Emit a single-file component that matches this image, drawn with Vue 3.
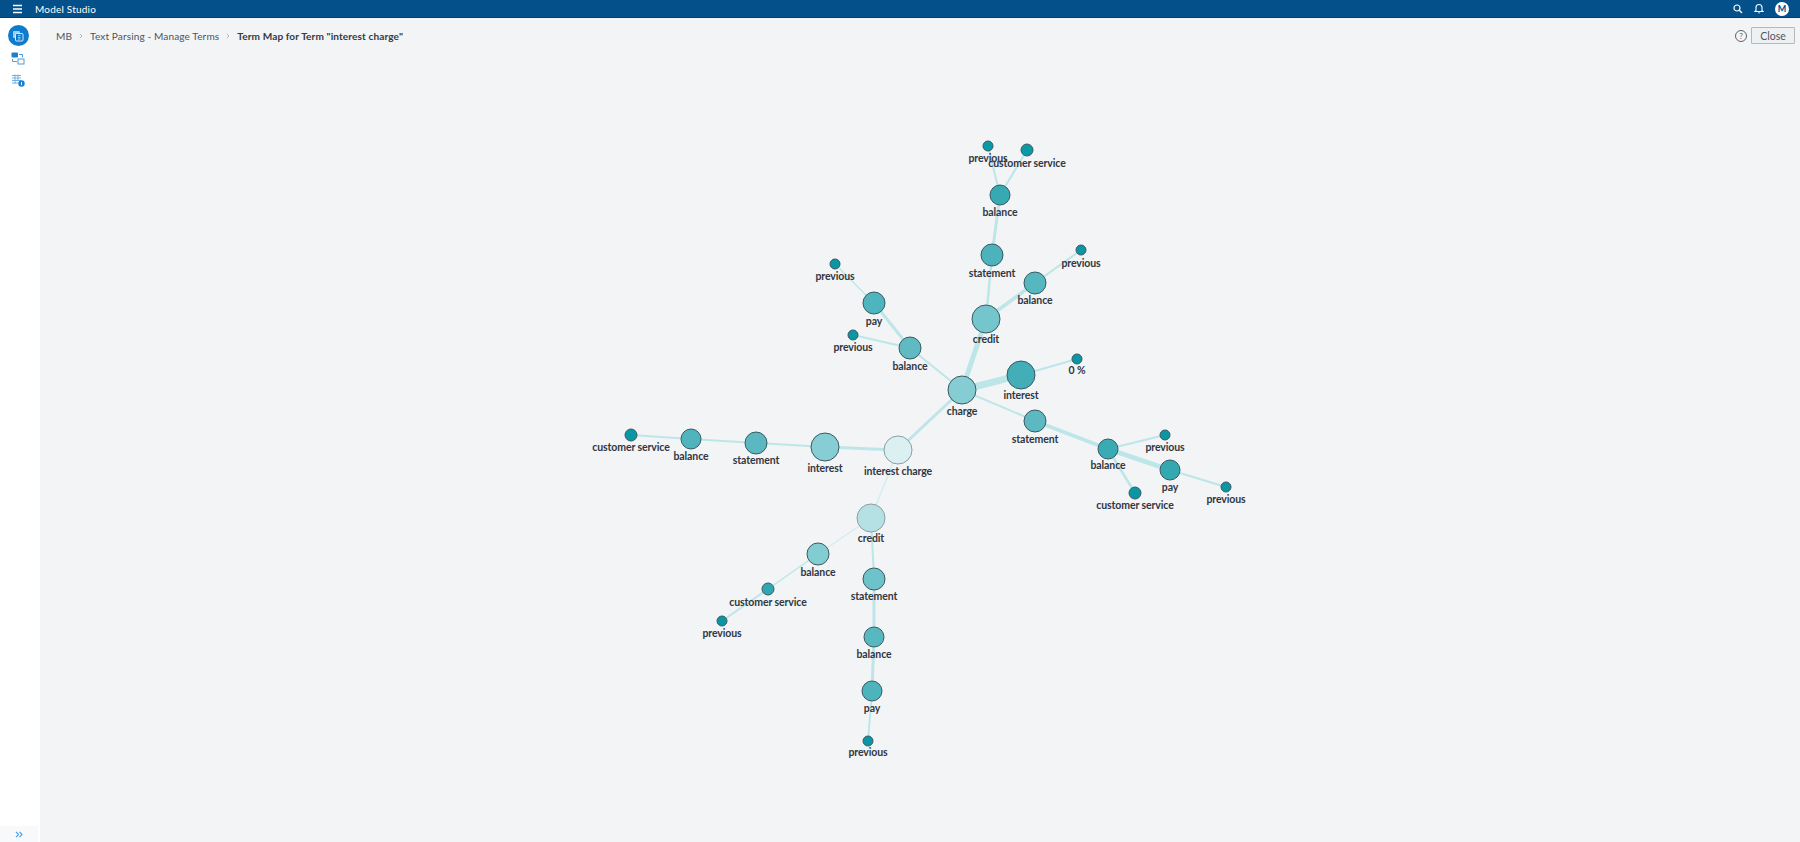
<script setup>
const nodes = {
  a1: { x: 988, y: 146, r: 5, f: '#0a99a6', t: 'previous', ly: 159 },
  a2: { x: 1027, y: 150, r: 6, f: '#0a9aa7', t: 'customer service', ly: 164 },
  a3: { x: 1000, y: 195, r: 10, f: '#36a9b3', t: 'balance', ly: 213 },
  a4: { x: 992, y: 255, r: 11, f: '#4cb2bb', t: 'statement', ly: 274 },
  a5: { x: 1035, y: 283, r: 11, f: '#56b7bf', t: 'balance', ly: 301 },
  a6: { x: 1081, y: 250, r: 5, f: '#0a97a3', t: 'previous', ly: 264 },
  a7: { x: 986, y: 319, r: 14, f: '#74c5cc', t: 'credit', ly: 340 },
  b1: { x: 835, y: 264, r: 5, f: '#0a97a3', t: 'previous', ly: 277 },
  b2: { x: 874, y: 303, r: 11, f: '#4eb4bd', t: 'pay', ly: 322 },
  b3: { x: 853, y: 335, r: 5, f: '#0a97a3', t: 'previous', ly: 348 },
  b4: { x: 910, y: 348, r: 11, f: '#5fbac2', t: 'balance', ly: 367 },
  c1: { x: 1077, y: 359, r: 5, f: '#0a97a3', t: '0 %', ly: 371 },
  c2: { x: 1021, y: 375, r: 14, f: '#44aeb8', t: 'interest', ly: 396 },
  c3: { x: 962, y: 390, r: 14, f: '#86cdd3', t: 'charge', ly: 412 },
  c4: { x: 1035, y: 421, r: 11, f: '#5cb9c1', t: 'statement', ly: 440 },
  c5: { x: 1108, y: 449, r: 10, f: '#3aabb5', t: 'balance', ly: 466 },
  c6: { x: 1165, y: 435, r: 5, f: '#0a97a3', t: 'previous', ly: 448 },
  c7: { x: 1170, y: 470, r: 10, f: '#33a8b1', t: 'pay', ly: 488 },
  c8: { x: 1226, y: 487, r: 5, f: '#0a97a3', t: 'previous', ly: 500 },
  c9: { x: 1135, y: 493, r: 6, f: '#0a97a3', t: 'customer service', ly: 506 },
  d1: { x: 825, y: 447, r: 14, f: '#86cdd4', t: 'interest', ly: 469 },
  d2: { x: 898, y: 450, r: 14, f: '#daf0f2', t: 'interest charge', ly: 472, light: true },
  d3: { x: 756, y: 443, r: 11, f: '#5bb8c0', t: 'statement', ly: 461 },
  d4: { x: 691, y: 439, r: 10, f: '#4fb4bd', t: 'balance', ly: 457 },
  d5: { x: 631, y: 435, r: 6, f: '#0a97a3', t: 'customer service', ly: 448 },
  e1: { x: 871, y: 518, r: 14, f: '#b5e1e5', t: 'credit', ly: 539, light: true },
  e2: { x: 818, y: 554, r: 11, f: '#83ccd2', t: 'balance', ly: 573 },
  e3: { x: 768, y: 589, r: 6, f: '#2fa6b1', t: 'customer service', ly: 603 },
  e4: { x: 722, y: 621, r: 5, f: '#0a97a3', t: 'previous', ly: 634 },
  e5: { x: 874, y: 579, r: 11, f: '#6ec2c9', t: 'statement', ly: 597 },
  e6: { x: 874, y: 637, r: 10, f: '#58b8c0', t: 'balance', ly: 655 },
  e7: { x: 872, y: 691, r: 10, f: '#4db3bc', t: 'pay', ly: 709 },
  e8: { x: 868, y: 741, r: 5, f: '#0a97a3', t: 'previous', ly: 753 }
}

const links = [
  ['c3', 'c2', 7], ['c3', 'a7', 5], ['c3', 'b4', 2], ['c3', 'c4', 2], ['c3', 'd2', 3],
  ['a7', 'a4', 2.5], ['a7', 'a5', 3.5], ['a5', 'a6', 2], ['a4', 'a3', 3], ['a3', 'a1', 2], ['a3', 'a2', 2],
  ['b4', 'b2', 3], ['b2', 'b1', 1.5], ['b4', 'b3', 2], ['c2', 'c1', 2],
  ['c4', 'c5', 3.5], ['c5', 'c6', 2], ['c5', 'c7', 5], ['c7', 'c8', 2], ['c5', 'c9', 2.5],
  ['d2', 'd1', 3], ['d1', 'd3', 2], ['d3', 'd4', 2], ['d4', 'd5', 2],
  ['d2', 'e1', 1.5, true], ['e1', 'e2', 1.5, true], ['e2', 'e3', 1.5], ['e3', 'e4', 2],
  ['e1', 'e5', 2], ['e5', 'e6', 3], ['e6', 'e7', 3], ['e7', 'e8', 2]
]

const edgeList = links.map(([a, b, w, faint]) => ({
  id: a + b,
  x1: nodes[a].x,
  y1: nodes[a].y,
  x2: nodes[b].x,
  y2: nodes[b].y,
  w,
  c: faint ? '#d3eef0' : '#bde6e9'
}))
const nodeList = Object.entries(nodes).map(([id, n]) => ({ id, ...n }))
</script>

<template>
  <div class="app">
    <header class="topbar">
      <div class="brand">
        <svg class="burger" width="12" height="10" viewBox="0 0 12 10">
          <path d="M1 1.5h9M1 5h9M1 8.5h9" stroke="#fff" stroke-width="1.5" fill="none" />
        </svg>
        <span class="title">Model Studio</span>
      </div>
      <div class="tools">
        <svg width="10" height="10" viewBox="0 0 10 10">
          <circle cx="4" cy="4" r="3" stroke="#fff" stroke-width="1.2" fill="none" />
          <path d="M6.3 6.3L9 9" stroke="#fff" stroke-width="1.4" />
        </svg>
        <svg width="10" height="11" viewBox="0 0 10 11">
          <path d="M2 7.5V4.5a3 3 0 0 1 6 0v3l1 1H1z" stroke="#fff" stroke-width="1.1" fill="none" />
          <path d="M4 9.5h2v.8H4z" fill="#fff" />
        </svg>
        <span class="avatar">M</span>
      </div>
    </header>

    <div class="body">
      <aside class="rail">
        <div class="rail-items">
          <span class="rail-active">
            <svg width="12" height="12" viewBox="0 0 12 12">
              <rect x="1" y="1" width="7" height="7" rx="1" fill="#9fcdf0" />
              <rect x="3.5" y="3.5" width="7.5" height="7.5" rx="1" fill="#0f7bcd" stroke="#d8ecfb" stroke-width="1" />
              <path d="M6 5.5h2.5M6 7.5h2.5M6 9h2.5" stroke="#d8ecfb" stroke-width=".7" />
            </svg>
          </span>
          <svg class="rail-icon" width="14" height="13" viewBox="0 0 14 13">
            <rect x="0.5" y="0.5" width="6.5" height="5" rx="1" fill="#1a7fce" />
            <rect x="7" y="7" width="6" height="5" fill="none" stroke="#4a9bd8" stroke-width="1" />
            <path d="M8 2.5h3.5v3M1.5 7v2.5H6" fill="none" stroke="#4a9bd8" stroke-width="1" />
          </svg>
          <svg class="rail-icon third" width="13" height="13" viewBox="0 0 13 13">
            <path d="M0 1.5h9M0 4h9M0 6.5h9M0 9h6" stroke="#72b1e2" stroke-width="1" />
            <path d="M3 .5v9M6 .5v6" stroke="#72b1e2" stroke-width="1" />
            <circle cx="9.5" cy="9.5" r="3.2" fill="#1a7fce" />
            <path d="M9.5 8v3.2" stroke="#fff" stroke-width="1" />
          </svg>
        </div>
        <div class="rail-foot">
          <svg width="8" height="7" viewBox="0 0 8 7">
            <path d="M1 .8L3.5 3.5 1 6.2M4.5 .8L7 3.5 4.500 6.2" fill="none" stroke="#3f9adf" stroke-width="1.1" />
          </svg>
        </div>
      </aside>

      <main class="main">
        <div class="crumbbar">
          <nav class="crumbs">
            <span>MB</span>
            <svg width="4" height="6" viewBox="0 0 4 6"><path d="M.8.8L3 3 .8 5.2" fill="none" stroke="#a4aab0" stroke-width=".8" /></svg>
            <span>Text Parsing - Manage Terms</span>
            <svg width="4" height="6" viewBox="0 0 4 6"><path d="M.8.8L3 3 .8 5.2" fill="none" stroke="#a4aab0" stroke-width=".8" /></svg>
            <strong>Term Map for Term "interest charge"</strong>
          </nav>
          <div class="actions">
            <span class="help">?</span>
            <button class="close" type="button">Close</button>
          </div>
        </div>

        <svg class="map" viewBox="40 18 1760 824" width="1760" height="824">
          <line v-for="e in edgeList" :key="e.id" :x1="e.x1" :y1="e.y1" :x2="e.x2" :y2="e.y2" :stroke="e.c" :stroke-width="e.w" />
          <circle v-for="n in nodeList" :key="n.id" :cx="n.x" :cy="n.y" :r="n.r" :fill="n.f" :stroke="n.light ? '#8e9ca1' : '#3a5a63'" stroke-width="1" />
          <text v-for="n in nodeList" :key="'t' + n.id" :x="n.x" :y="n.ly + 3" class="label">{{ n.t }}</text>
        </svg>
      </main>
    </div>
  </div>
</template>

<style scoped>
.app {
  width: 1800px;
  height: 842px;
  display: flex;
  flex-direction: column;
  overflow: hidden;
  font-family: Lato, "Liberation Sans", sans-serif;
  color: #323a44;
}
.topbar {
  height: 18px;
  box-sizing: border-box;
  flex: none;
  display: flex;
  align-items: center;
  justify-content: space-between;
  background: #04508a;
  border-bottom: 1px solid #0a3f68;
  color: #fff;
  padding: 0 11px 0 12px;
}
.brand {
  display: flex;
  align-items: center;
  gap: 11px;
}
.burger {
  display: block;
}
.title {
  font-size: 10px;
  letter-spacing: 0.2px;
}
.tools {
  display: flex;
  align-items: center;
  gap: 11px;
}
.tools svg {
  display: block;
}
.avatar {
  width: 14px;
  height: 14px;
  border-radius: 50%;
  background: #fff;
  color: #04508a;
  font-size: 9px;
  font-weight: 700;
  display: flex;
  align-items: center;
  justify-content: center;
}
.body {
  flex: 1;
  display: flex;
  min-height: 0;
}
.rail {
  width: 40px;
  flex: none;
  background: #fff;
  display: flex;
  flex-direction: column;
  justify-content: space-between;
}
.rail-items {
  display: flex;
  flex-direction: column;
  align-items: center;
  padding: 7px 4px 0 0;
  gap: 6px;
}
.rail-active {
  width: 21px;
  height: 21px;
  border-radius: 50%;
  background: #0f7bcd;
  display: flex;
  align-items: center;
  justify-content: center;
}
.rail-icon {
  display: block;
}
.rail-icon.third {
  margin-top: 3px;
}
.rail-foot {
  height: 16px;
  width: 38px;
  background: #f7f9fb;
  display: flex;
  align-items: center;
  justify-content: center;
}
.main {
  flex: 1;
  position: relative;
  background: #f3f4f6;
  min-width: 0;
}
.crumbbar {
  position: relative;
  z-index: 1;
  display: flex;
  align-items: flex-start;
  justify-content: space-between;
  padding: 9px 5px 0 16px;
}
.crumbs {
  display: flex;
  align-items: center;
  gap: 7px;
  font-size: 10.1px;
  line-height: 15px;
  height: 18px;
  letter-spacing: 0.1px;
}
.crumbs span {
  color: #4c5560;
}
.crumbs strong {
  color: #323a44;
  font-weight: 700;
}
.actions {
  display: flex;
  align-items: center;
  gap: 4px;
}
.help {
  width: 10px;
  height: 10px;
  border: 1px solid #59616a;
  border-radius: 50%;
  font-size: 8px;
  line-height: 10px;
  text-align: center;
  color: #59616a;
}
.close {
  width: 44px;
  height: 17px;
  padding: 0;
  box-sizing: border-box;
  background: #eef1f3;
  border: 1px solid #b4b9bd;
  border-radius: 1px;
  font: 10.5px Lato, "Liberation Sans", sans-serif;
  color: #4c5560;
}
.map {
  position: absolute;
  left: 0;
  top: 0;
  display: block;
}
.label {
  font-size: 10.5px;
  font-weight: 700;
  letter-spacing: -0.1px;
  fill: #2f3742;
  text-anchor: middle;
}
</style>
